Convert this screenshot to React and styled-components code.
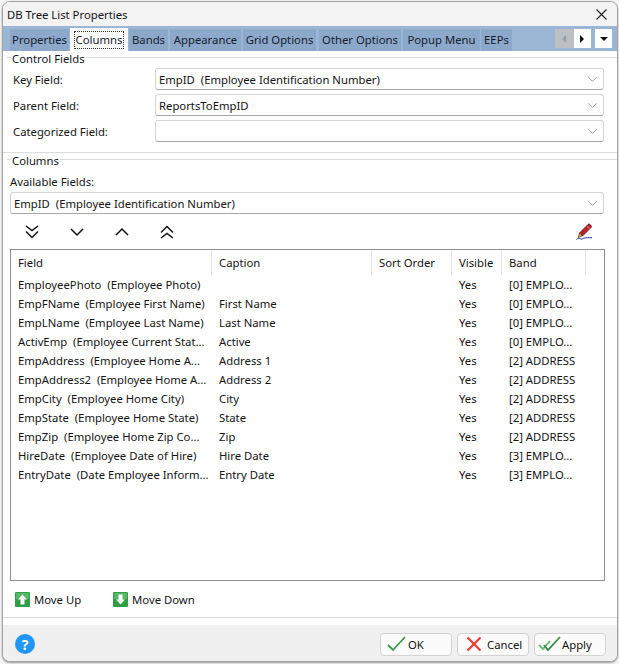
import React from "react";
import styled, { createGlobalStyle } from "styled-components";
import { ChevronDown } from "lucide-react";

const GlobalStyle = createGlobalStyle`
  html, body { margin: 0; padding: 0; height: 100%; background: #f4f4f4; }
  body { font-family: "Noto Sans", "Open Sans", sans-serif; font-size: 11.3px; color: #141414; }
  * { box-sizing: border-box; }
`;

const Dialog = styled.div`
  width: 616px;
  height: 661px;
  margin-left: 2px;
  margin-top: 1px;
  background: #fff;
  border: 1px solid #a3a3a3;
  border-radius: 8px;
  overflow: hidden;
  display: flex;
  flex-direction: column;
  box-shadow: 0 1px 2px #9a9a9a;
`;

const TitleBar = styled.div`
  height: 24px;
  flex: none;
  background: #f3f3f3;
  display: flex;
  align-items: center;
  justify-content: space-between;
  padding: 0 10px 0 4px;
`;

const CloseIcon = () => (
  <svg width="11" height="11" viewBox="0 0 11 11">
    <path d="M.5.5l10 10M10.5.5l-10 10" stroke="#222" strokeWidth="1.1" fill="none" />
  </svg>
);

const TabBar = styled.div`
  height: 25px;
  flex: none;
  background: #9bb5d4;
  display: flex;
  align-items: flex-end;
  padding: 0 5px 0 7px;
`;

const Tab = styled.div`
  width: ${(p) => p.$w}px;
  height: ${(p) => (p.$active ? "23px" : "22px")};
  margin-right: ${(p) => p.$gap || 1}px;
  display: flex;
  align-items: center;
  justify-content: center;
  background: ${(p) => (p.$active ? "#fff" : "#8ca9cb")};
  color: #16202c;
  white-space: nowrap;
  span {
    outline: ${(p) => (p.$active ? "1px dotted #333" : "none")};
    padding: 0 1px 1px;
  }
`;

const TabNav = styled.div`
  margin-left: auto;
  display: flex;
  align-self: flex-start;
  margin-top: 3px;
`;

const NavButton = styled.div`
  width: ${(p) => p.$w}px;
  height: 19px;
  margin-left: ${(p) => p.$gap || 0}px;
  background: ${(p) => (p.$off ? "#bcc0c5" : "#fff")};
  display: flex;
  align-items: center;
  justify-content: center;
`;

const Triangle = ({ dir, color }) => {
  const pts = { left: "6,1 6,9 2,5", right: "2,1 2,9 6,5", down: "1,3 9,3 5,7" };
  return (
    <svg width="10" height="10" viewBox="0 0 10 10">
      <polygon points={pts[dir]} fill={color} />
    </svg>
  );
};

const Body = styled.div`
  flex: 1;
  min-height: 0;
  display: flex;
  flex-direction: column;
  padding-top: 1px;
`;

const Legend = styled.div`
  display: flex;
  align-items: flex-start;
  height: 14px;
  padding-left: 4px;
  margin-top: ${(p) => p.$top || 0}px;
  &::before {
    content: "";
    width: 4px;
    flex: none;
    margin-top: 5px;
    border-top: 1px solid #dcdcdc;
  }
  &::after {
    content: "";
    flex: 1;
    margin-top: 5px;
    border-top: 1px solid #dcdcdc;
  }
  span {
    padding: 0 1px;
    line-height: 14px;
  }
`;

const ControlGrid = styled.div`
  display: grid;
  grid-template-columns: 142px 449px;
  row-gap: 4px;
  padding: 2px 0 0 10px;
  align-items: center;
`;

const RowLabel = styled.div``;

const Combo = styled.div`
  height: 22px;
  background: #fefefe;
  border: 1px solid #d5d5d5;
  border-bottom-color: #a8a8a8;
  border-radius: 3px;
  display: flex;
  align-items: center;
  justify-content: space-between;
  padding: 0 3px 0 3px;
  white-space: pre;
  svg { color: #666; margin-left: auto; }
`;

const Divider = styled.div`
  border-top: 1px solid #dcdcdc;
  margin-top: ${(p) => p.$top || 0}px;
`;

const AvailableBlock = styled.div`
  padding: 5px 13px 0 7px;
`;

const FieldLabel = styled.div`
  height: 17px;
  margin-bottom: 2px;
  padding-top: 1px;
`;

const Toolbar = styled.div`
  height: 35px;
  display: flex;
  align-items: center;
  justify-content: space-between;
  padding: 0 23px 0 21px;
`;

const ArrowGroup = styled.div`
  display: flex;
  gap: 29px;
`;

const Chevrons = ({ up, double }) => (
  <svg width="16" height="16" viewBox="0 0 16 16" fill="none" stroke="#111" strokeWidth="1.5">
    <g transform={up ? "rotate(180 8 8)" : undefined}>
      {double && <path d="M2 2l6 4.500 6-4.500" />}
      <path d={double ? "M2 7.500L8 13.500l6-6" : "M2 5l6 6 6-6"} />
    </g>
  </svg>
);

const PencilIcon = () => (
  <svg width="18" height="18" viewBox="0 0 18 18">
    <path d="M3.500 10L12 1.500c.8-.7 1.500-.5 2.500.4s1.200 1.700.5 2.600L6.500 13z" fill="#c0202a" stroke="#4a0a0e" strokeWidth=".8" />
    <path d="M11 3.500l2.800 2.500" stroke="#e88a80" strokeWidth="1" />
    <path d="M3.500 10l3 3-4.500 1.500z" fill="#e8a850" stroke="#222" strokeWidth=".6" />
    <path d="M.5 16.500c1.500-1.500 3-1.300 4-.6 1 .6 2.500-.4 3.500-.8 1.500-.5 5-.4 8-.4" stroke="#1a3a9a" strokeWidth="1" fill="none" />
  </svg>
);

const ListBox = styled.div`
  flex: 1;
  min-height: 0;
  margin: 0 12px 0 7px;
  border: 1px solid #8e8e8e;
  background: #fff;
`;

const HeaderRow = styled.div`
  height: 25px;
  display: flex;
`;

const HeaderCell = styled.div`
  width: ${(p) => p.$w}px;
  flex: none;
  padding-left: 7px;
  display: flex;
  align-items: center;
  border-right: 1px solid #e4e4e4;
`;

const DataRow = styled.div`
  height: 19px;
  display: flex;
  align-items: center;
`;

const DataCell = styled.div`
  width: ${(p) => p.$w}px;
  flex: none;
  padding-left: 7px;
  white-space: pre;
`;

const MoveBar = styled.div`
  height: 36px;
  flex: none;
  display: flex;
  align-items: center;
  padding-left: 12px;
  gap: 32px;
`;

const MoveButton = styled.div`
  display: flex;
  align-items: center;
  gap: 4px;
`;

const MoveIcon = ({ up }) => (
  <svg width="15" height="15" viewBox="0 0 15 15">
    <rect width="15" height="15" rx="1" fill="#2f9e44" />
    <rect x="1" y="1" width="13" height="6" fill="#58b868" />
    <path
      d={up ? "M7.500 2.500L12 7.500H9.500V12.500H5.500V7.500H3z" : "M7.500 12.500L12 7.500H9.500V2.500H5.500V7.500H3z"}
      fill="#fff"
    />
  </svg>
);

const Footer = styled.div`
  height: 36px;
  flex: none;
  margin-top: 7px;
  background: #f0f0f0;
  display: flex;
  align-items: center;
  justify-content: space-between;
  padding: 2px 11px 0 12px;
`;

const HelpBadge = styled.div`
  width: 20px;
  height: 20px;
  border-radius: 50%;
  background: #2196f3;
  color: #fff;
  font-weight: 700;
  font-size: 14px;
  display: flex;
  align-items: center;
  justify-content: center;
`;

const ButtonRow = styled.div`
  display: flex;
  gap: 5px;
`;

const Button = styled.div`
  width: 72px;
  height: 23px;
  background: #fbfbfb;
  border: 1px solid #d2d2d2;
  border-radius: 4px;
  display: flex;
  align-items: center;
  padding-left: ${(p) => p.$pad}px;
  gap: ${(p) => p.$gap}px;
`;

const OkIcon = () => (
  <svg width="20" height="16" viewBox="0 0 20 16" fill="none">
    <path d="M1 9l5 5L18 1" stroke="#3a9a4a" strokeWidth="1.800" />
  </svg>
);

const CancelIcon = () => (
  <svg width="16" height="16" viewBox="0 0 16 16" fill="none">
    <path d="M1.500 1.500l13 13M14.500 1.500l-13 13" stroke="#ee3a34" strokeWidth="2.200" />
  </svg>
);

const ApplyIcon = () => (
  <svg width="23" height="16" viewBox="0 0 23 16" fill="none">
    <path d="M1 9l4 4L12 5" stroke="#68b878" strokeWidth="1.800" />
    <path d="M6 9l4 5L22 1" stroke="#3a8a4a" strokeWidth="1.800" />
  </svg>
);

const tabs = [
  { label: "Properties", w: 59 },
  { label: "Columns", w: 58, active: true },
  { label: "Bands", w: 39, gap: 2 },
  { label: "Appearance", w: 71, gap: 2 },
  { label: "Grid Options", w: 73, gap: 3 },
  { label: "Other Options", w: 82, gap: 2 },
  { label: "Popup Menu", w: 77 },
  { label: "EEPs", w: 31 },
];

const widths = [201, 160, 80, 50, 84];
const headers = ["Field", "Caption", "Sort Order", "Visible", "Band"];

const rows = [
  ["EmployeePhoto  (Employee Photo)", "", "", "Yes", "[0] EMPLO..."],
  ["EmpFName  (Employee First Name)", "First Name", "", "Yes", "[0] EMPLO..."],
  ["EmpLName  (Employee Last Name)", "Last Name", "", "Yes", "[0] EMPLO..."],
  ["ActivEmp  (Employee Current Stat...", "Active", "", "Yes", "[0] EMPLO..."],
  ["EmpAddress  (Employee Home A...", "Address 1", "", "Yes", "[2] ADDRESS"],
  ["EmpAddress2  (Employee Home A...", "Address 2", "", "Yes", "[2] ADDRESS"],
  ["EmpCity  (Employee Home City)", "City", "", "Yes", "[2] ADDRESS"],
  ["EmpState  (Employee Home State)", "State", "", "Yes", "[2] ADDRESS"],
  ["EmpZip  (Employee Home Zip Co...", "Zip", "", "Yes", "[2] ADDRESS"],
  ["HireDate  (Employee Date of Hire)", "Hire Date", "", "Yes", "[3] EMPLO..."],
  ["EntryDate  (Date Employee Inform...", "Entry Date", "", "Yes", "[3] EMPLO..."],
];

const controlFields = [
  ["Key Field:", "EmpID  (Employee Identification Number)"],
  ["Parent Field:", "ReportsToEmpID"],
  ["Categorized Field:", ""],
];

export default function App() {
  return (
    <>
      <GlobalStyle />
      <Dialog>
        <TitleBar>
          <span>DB Tree List Properties</span>
          <CloseIcon />
        </TitleBar>
        <TabBar>
          {tabs.map((t) => (
            <Tab key={t.label} $w={t.w} $active={t.active} $gap={t.gap}>
              <span>{t.label}</span>
            </Tab>
          ))}
          <TabNav>
            <NavButton $w={19} $off>
              <Triangle dir="left" color="#9aa0a6" />
            </NavButton>
            <NavButton $w={17}>
              <Triangle dir="right" color="#111" />
            </NavButton>
            <NavButton $w={17} $gap={4}>
              <Triangle dir="down" color="#111" />
            </NavButton>
          </TabNav>
        </TabBar>
        <Body>
          <Legend>
            <span>Control Fields</span>
          </Legend>
          <ControlGrid>
            {controlFields.map(([label, value]) => (
              <React.Fragment key={label}>
                <RowLabel>{label}</RowLabel>
                <Combo>
                  {value}
                  <ChevronDown size={15} strokeWidth={1} />
                </Combo>
              </React.Fragment>
            ))}
          </ControlGrid>
          <Divider $top={10} />
          <Legend $top={1}>
            <span>Columns</span>
          </Legend>
          <AvailableBlock>
            <FieldLabel>Available Fields:</FieldLabel>
            <Combo>
              EmpID  (Employee Identification Number)
              <ChevronDown size={15} strokeWidth={1} />
            </Combo>
          </AvailableBlock>
          <Toolbar>
            <ArrowGroup>
              <Chevrons double />
              <Chevrons />
              <Chevrons up />
              <Chevrons up double />
            </ArrowGroup>
            <PencilIcon />
          </Toolbar>
          <ListBox>
            <HeaderRow>
              {headers.map((h, i) => (
                <HeaderCell key={h} $w={widths[i]}>
                  {h}
                </HeaderCell>
              ))}
            </HeaderRow>
            {rows.map((r) => (
              <DataRow key={r[0]}>
                {r.map((c, i) => (
                  <DataCell key={i} $w={widths[i]}>
                    {c}
                  </DataCell>
                ))}
              </DataRow>
            ))}
          </ListBox>
          <MoveBar>
            <MoveButton>
              <MoveIcon up />
              Move Up
            </MoveButton>
            <MoveButton>
              <MoveIcon />
              Move Down
            </MoveButton>
          </MoveBar>
          <Divider />
        </Body>
        <Footer>
          <HelpBadge>?</HelpBadge>
          <ButtonRow>
            <Button $pad={6} $gap={1}>
              <OkIcon />
              OK
            </Button>
            <Button $pad={8} $gap={5}>
              <CancelIcon />
              Cancel
            </Button>
            <Button $pad={3} $gap={1}>
              <ApplyIcon />
              Apply
            </Button>
          </ButtonRow>
        </Footer>
      </Dialog>
    </>
  );
}
